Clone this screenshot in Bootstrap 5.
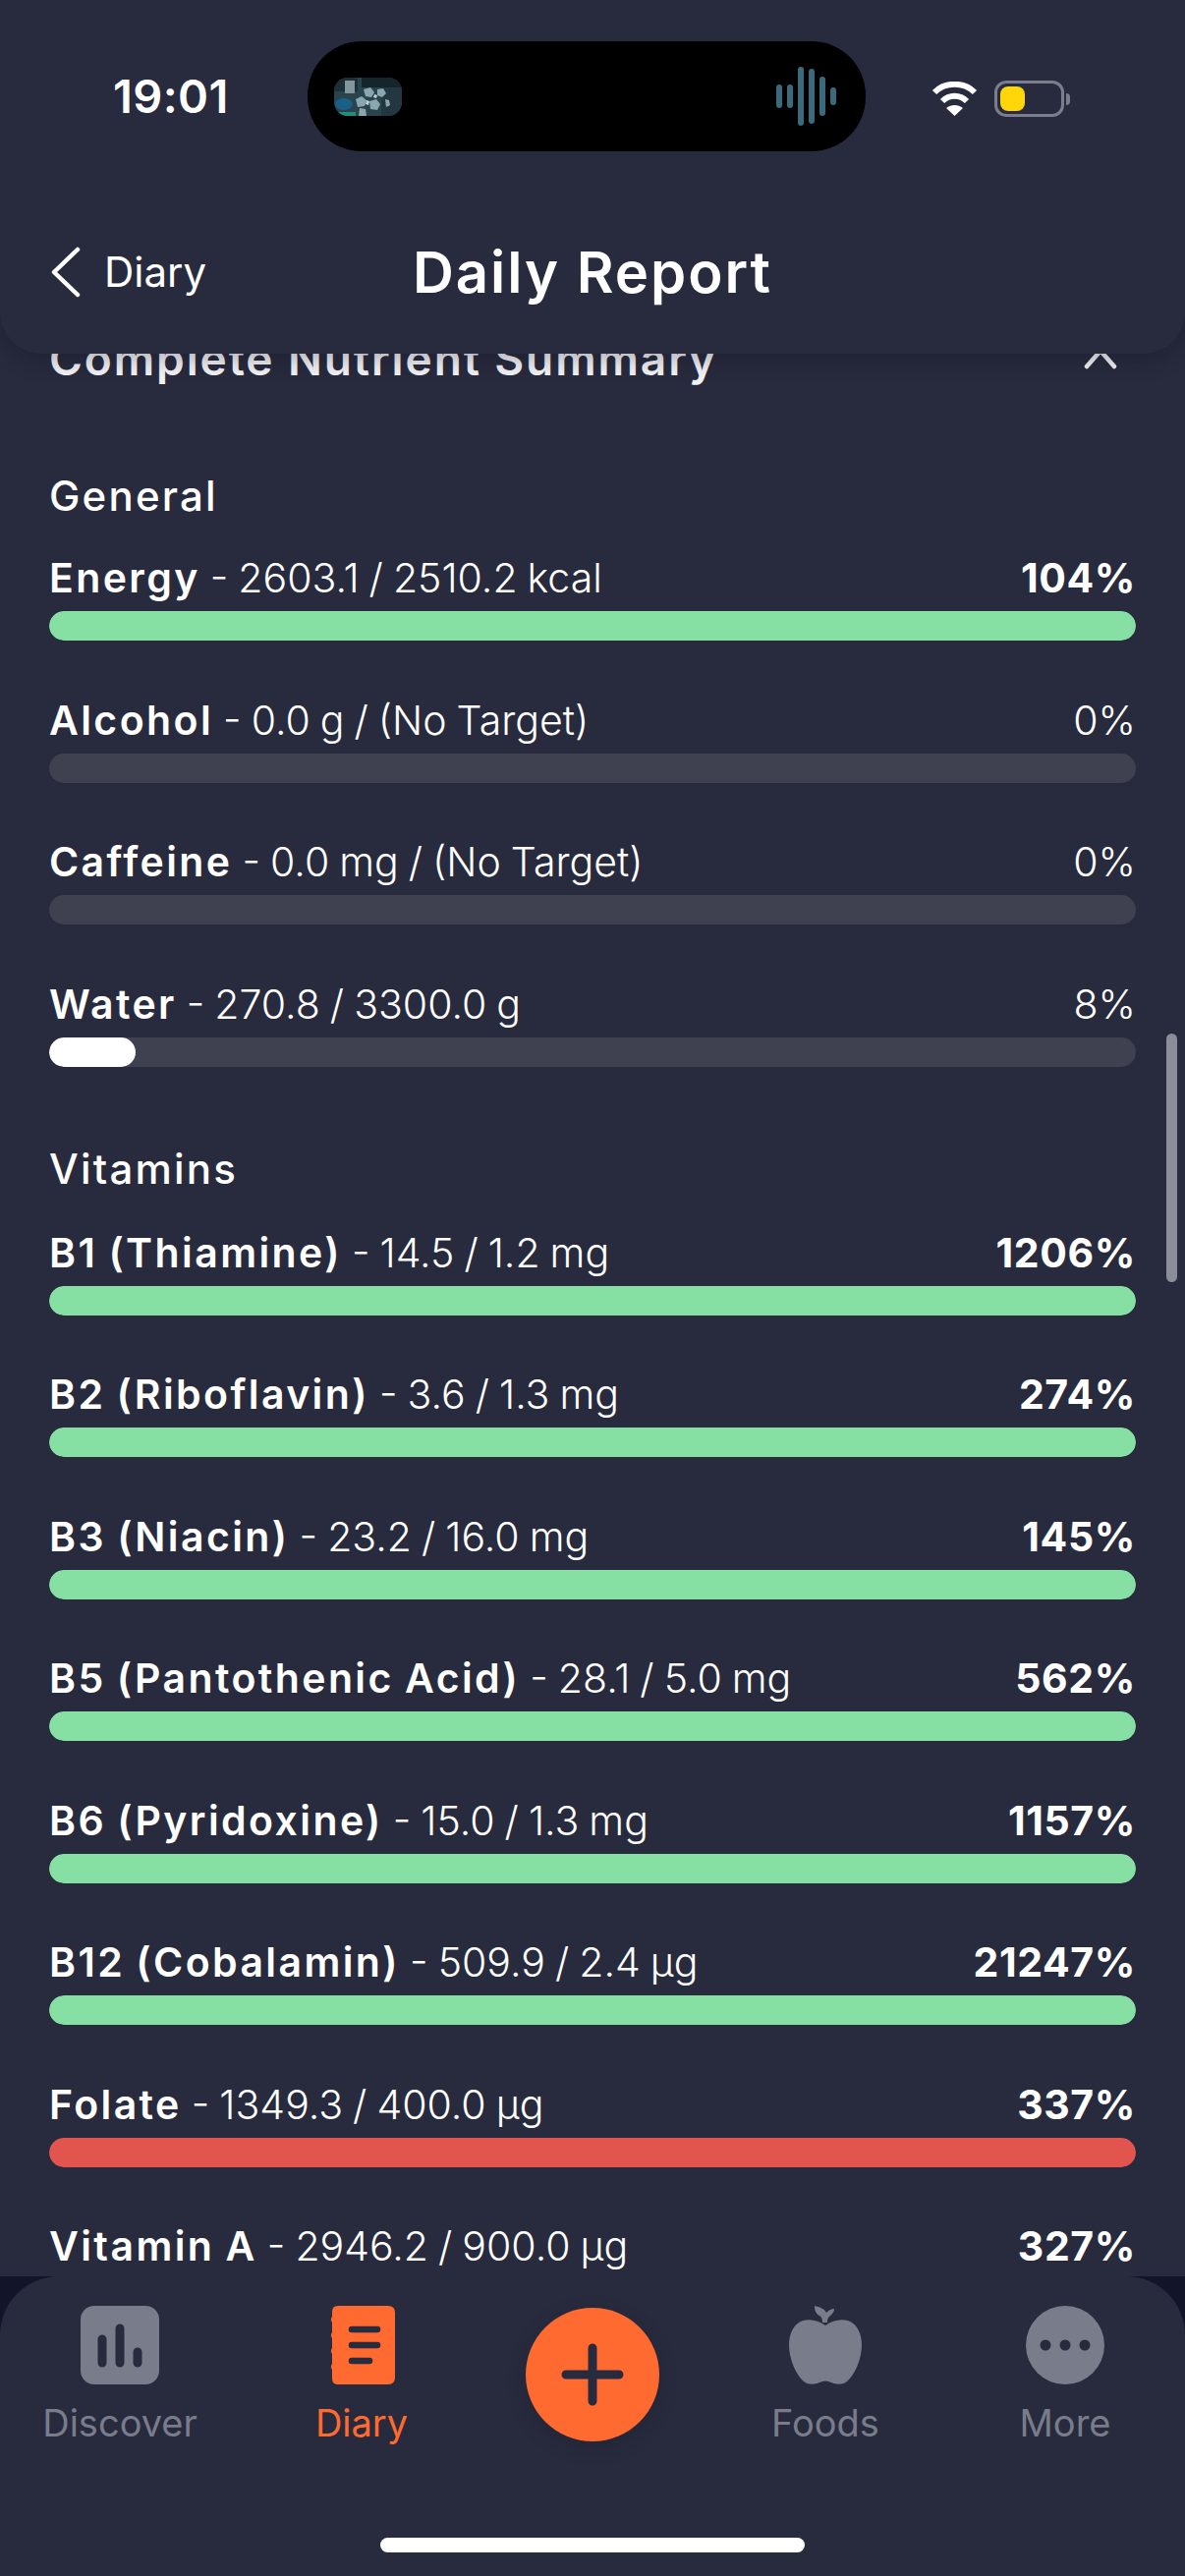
<!doctype html>
<html lang="en">
<head>
<meta charset="utf-8">
<title>Daily Report</title>
<link href="https://cdn.jsdelivr.net/npm/bootstrap@5.3.0/dist/css/bootstrap.min.css" rel="stylesheet">
<style>
html,body{margin:0;background:#12142a;}
body{font-family:Inter,"Liberation Sans",sans-serif;color:#fff;}
.phone{width:1206px;height:2622px;overflow:hidden;display:flex;flex-direction:column;position:relative;background:#12142a;}
.topbar{height:360px;flex:none;background:#282b3d;border-radius:0 0 42px 42px;box-shadow:0 6px 22px rgba(12,14,30,.3);position:relative;z-index:3;padding-top:42px;}
.statusrow{display:grid;grid-template-columns:313px 568px 1fr;height:110px;}
.clock{font-size:47px;font-weight:600;line-height:112px;padding-left:115px;letter-spacing:.4px;}
.island{background:#000;border-radius:55px;display:flex;align-items:center;justify-content:space-between;padding:0 30px 0 27px;}
.sysicons{display:flex;align-items:center;padding-left:67px;padding-top:4px;gap:17px;}
.batt{width:71px;height:37px;border:3px solid #7a7d8c;border-radius:12px;padding:3px;position:relative;}
.batt::after{content:"";position:absolute;right:-9px;top:10px;width:4px;height:12px;background:#7a7d8c;border-radius:0 4px 4px 0;}
.battfill{width:25px;height:25px;background:#ffd60a;border-radius:8px;}
.navrow{display:grid;grid-template-columns:1fr auto 1fr;align-items:center;height:70px;margin-top:90px;padding-left:52px;}
.backlink{display:flex;align-items:center;gap:24px;color:#fff;font-size:42px;line-height:1;text-decoration:none;}
.pagetitle{font-size:58px;font-weight:600;line-height:70px;margin:0 52px 0 0;letter-spacing:2px;}
.pane{flex:1;min-height:0;background:#282b3d;overflow:hidden;padding:42px 50px 0;margin-top:-42px;position:relative;}
.sumhead{display:flex;justify-content:space-between;align-items:center;height:60px;margin-top:-25px;margin-bottom:82px;font-size:46px;font-weight:600;letter-spacing:1.9px;color:#f3f3f6;}
.sumhead svg{margin-right:19px;}
.grouphead{font-size:42px;font-weight:500;line-height:56px;margin-bottom:28px;letter-spacing:2.2px;}
.grouphead.later{margin-top:76px;margin-bottom:30px;}
.nrow{margin-bottom:53.5px;}
.nline{display:flex;justify-content:space-between;line-height:54px;height:56px;margin-bottom:5px;font-size:41px;font-weight:300;white-space:nowrap;word-spacing:-1.5px;}
.nline b{font-weight:600;letter-spacing:2.4px;}
.pct-b{font-weight:700;letter-spacing:.6px;}
.trk.progress{height:30px;background:#3f4150;border-radius:15px;}
.trk .progress-bar{border-radius:15px;}
.fill-g{background:#86e0a3;}
.fill-w{background:#fff;}
.fill-r{background:#e2554e;}
.scrollthumb{position:absolute;left:1187px;top:734px;width:11px;height:253px;border-radius:6px;background:#8b8d98;}
.tabbar{flex:none;height:305px;background:#282b3d;border-radius:60px 60px 0 0;padding-top:30px;position:relative;z-index:3;}
.tabgrid{display:grid;grid-template-columns:244px 248px 222px 252px 236px;height:236px;align-items:start;}
.tabitem{display:flex;flex-direction:column;align-items:center;color:#797c8a;font-size:38px;line-height:47px;text-decoration:none;}
.tabitem svg{margin-bottom:16px;display:block;}
.tabitem.active{color:#ff6a30;}
.addbtn.btn{width:136px;height:136px;border-radius:50%;background:#ff6a30;border:0;padding:0;margin:2px auto 0;display:flex;align-items:center;justify-content:center;box-shadow:0 6px 18px rgba(20,22,40,.25);}
.homebar{width:432px;height:15px;border-radius:8px;background:#fff;margin:0 auto;}
</style>
</head>
<body>
<div class="phone">
  <header class="topbar">
    <div class="statusrow">
      <div class="clock">19:01</div>
      <div class="island">
        <svg width="69" height="39" viewBox="0 0 69 39"><defs><clipPath id="thumb"><rect width="69" height="39" rx="14"/></clipPath></defs><g clip-path="url(#thumb)"><rect width="69" height="39" fill="#2a444e"/><rect x="0" y="0" width="24" height="14" fill="#1d3038"/><rect x="11" y="3" width="10" height="13" fill="#7f979d"/><rect x="28" y="0" width="41" height="10" fill="#14252c"/><rect x="48" y="10" width="21" height="29" fill="#24363f"/><ellipse cx="10" cy="27" rx="9" ry="6" fill="#1a5f86"/><rect x="0" y="35" width="22" height="4" fill="#1f8f78"/><path d="M22 22l6-3 5 4-2 6-7 1zM30 12l7-2 4 5-3 5-6-1zM36 24l7-2 4 5-3 6-7-1zM44 12l6-1 3 5-4 4-5-2zM26 31l6 1 1 7h-8zM52 22l4 1 1 5-4 2z" fill="#8aa6b0"/><path d="M33 23l3 1-1 4-3-1zM41 17l3 1-1 3-3-1z" fill="#c2d3d6"/></g></svg>
        <svg width="61" height="60" viewBox="0 0 61 60" stroke="#3a6a7c" stroke-width="6" stroke-linecap="round"><path d="M3 21V39M14 21V39M25 3V57M36 5V55M47 13V47M58 24V36"/></svg>
      </div>
      <div class="sysicons">
        <svg width="47" height="35" viewBox="0 0 47 35" fill="none" stroke="#fff" stroke-width="6"><path d="M3 11C14 0 33 0 44 11"/><path d="M11 20C18 13 29 13 36 20"/><path d="M23.500 35L15 27C20 23 27 23 32 27Z" fill="#fff" stroke="none"/></svg>
        <div class="batt"><div class="battfill"></div></div>
      </div>
    </div>
    <div class="navrow">
      <a class="backlink" href="#">
        <svg width="30" height="52" viewBox="0 0 30 52" fill="none" stroke="#fff" stroke-width="4.500" stroke-linecap="round" stroke-linejoin="round"><path d="M27 3L3 26L27 49"/></svg>
        <span>Diary</span>
      </a>
      <h1 class="pagetitle">Daily Report</h1>
      <div></div>
    </div>
  </header>

  <main class="pane">
    <div class="sumhead">
      <span>Complete Nutrient Summary</span>
      <svg width="34" height="22" viewBox="0 0 34 22" fill="none" stroke="#f3f3f6" stroke-width="4.500" stroke-linecap="round" stroke-linejoin="round"><path d="M3 19L17 3L31 19"/></svg>
    </div>

    <div class="grouphead">General</div>
    <div class="nrow">
      <div class="nline"><span><b>Energy</b> - 2603.1 / 2510.2 kcal</span><span class="pct-b">104%</span></div>
      <div class="progress trk"><div class="progress-bar fill-g" style="width:100%"></div></div>
    </div>
    <div class="nrow">
      <div class="nline"><span><b>Alcohol</b> - 0.0 g / (No Target)</span><span>0%</span></div>
      <div class="progress trk"><div class="progress-bar fill-g" style="width:0%"></div></div>
    </div>
    <div class="nrow">
      <div class="nline"><span><b>Caffeine</b> - 0.0 mg / (No Target)</span><span>0%</span></div>
      <div class="progress trk"><div class="progress-bar fill-g" style="width:0%"></div></div>
    </div>
    <div class="nrow">
      <div class="nline"><span><b>Water</b> - 270.8 / 3300.0 g</span><span>8%</span></div>
      <div class="progress trk"><div class="progress-bar fill-w" style="width:8%"></div></div>
    </div>

    <div class="grouphead later">Vitamins</div>
    <div class="nrow">
      <div class="nline"><span><b>B1 (Thiamine)</b> - 14.5 / 1.2 mg</span><span class="pct-b">1206%</span></div>
      <div class="progress trk"><div class="progress-bar fill-g" style="width:100%"></div></div>
    </div>
    <div class="nrow">
      <div class="nline"><span><b>B2 (Riboflavin)</b> - 3.6 / 1.3 mg</span><span class="pct-b">274%</span></div>
      <div class="progress trk"><div class="progress-bar fill-g" style="width:100%"></div></div>
    </div>
    <div class="nrow">
      <div class="nline"><span><b>B3 (Niacin)</b> - 23.2 / 16.0 mg</span><span class="pct-b">145%</span></div>
      <div class="progress trk"><div class="progress-bar fill-g" style="width:100%"></div></div>
    </div>
    <div class="nrow">
      <div class="nline"><span><b>B5 (Pantothenic Acid)</b> - 28.1 / 5.0 mg</span><span class="pct-b">562%</span></div>
      <div class="progress trk"><div class="progress-bar fill-g" style="width:100%"></div></div>
    </div>
    <div class="nrow">
      <div class="nline"><span><b>B6 (Pyridoxine)</b> - 15.0 / 1.3 mg</span><span class="pct-b">1157%</span></div>
      <div class="progress trk"><div class="progress-bar fill-g" style="width:100%"></div></div>
    </div>
    <div class="nrow">
      <div class="nline"><span><b>B12 (Cobalamin)</b> - 509.9 / 2.4 µg</span><span class="pct-b">21247%</span></div>
      <div class="progress trk"><div class="progress-bar fill-g" style="width:100%"></div></div>
    </div>
    <div class="nrow">
      <div class="nline"><span><b>Folate</b> - 1349.3 / 400.0 µg</span><span class="pct-b">337%</span></div>
      <div class="progress trk"><div class="progress-bar fill-r" style="width:100%"></div></div>
    </div>
    <div class="nrow">
      <div class="nline"><span><b>Vitamin A</b> - 2946.2 / 900.0 µg</span><span class="pct-b">327%</span></div>
    </div>
    <div class="scrollthumb"></div>
  </main>

  <nav class="tabbar">
    <div class="tabgrid">
      <a class="tabitem" href="#">
        <svg width="80" height="80" viewBox="0 0 80 80"><rect width="80" height="80" rx="14" fill="#797c8a"/><g stroke="#282b3d" stroke-width="9" stroke-linecap="round"><path d="M22 34V58M40 23V58M58 47V58"/></g></svg>
        <span>Discover</span>
      </a>
      <a class="tabitem active" href="#">
        <svg width="68" height="80" viewBox="0 0 68 80"><path d="M10 0H61Q68 0 68 7V73Q68 80 61 80H10Q4 80 4 74V65A5 5 0 0 1 4 59V49A5 5 0 0 1 4 43V33A5 5 0 0 1 4 27V17A5 5 0 0 1 4 11V6Q4 0 10 0Z" fill="#ff6a30"/><g stroke="#282b3d" stroke-width="6.500" stroke-linecap="round"><path d="M24 24H50M24 40H50M24 56H42"/></g></svg>
        <span>Diary</span>
      </a>
      <button class="btn addbtn" type="button" aria-label="Add">
        <svg width="64" height="64" viewBox="0 0 64 64" stroke="#282b3d" stroke-width="9" stroke-linecap="round"><path d="M32 5V59M5 32H59"/></svg>
      </button>
      <a class="tabitem" href="#">
        <svg width="74" height="80" viewBox="0 0 74 80" fill="#797c8a"><path d="M37 20C30 15 22 13 14 15C5 18 0 28 0 40C0 54 7 70 15 77C20 81 27 80 31 78C35 76 39 76 43 78C47 80 54 81 59 77C67 70 74 54 74 40C74 28 69 18 60 15C52 13 44 15 37 20Z"/><path d="M34 17C34 13 33 11 31 10C27 8 26 4 26 0C31 1 36 3 38 7C40 5 43 3 46 3C46 7 43 9 41 11C39 13 39 15 39 17Z"/></svg>
        <span>Foods</span>
      </a>
      <a class="tabitem" href="#">
        <svg width="80" height="80" viewBox="0 0 80 80"><circle cx="40" cy="40" r="40" fill="#797c8a"/><g fill="#282b3d"><circle cx="20" cy="40" r="5.500"/><circle cx="40" cy="40" r="5.500"/><circle cx="60" cy="40" r="5.500"/></g></svg>
        <span>More</span>
      </a>
    </div>
    <div class="homebar"></div>
  </nav>
</div>
<script src="https://cdn.jsdelivr.net/npm/bootstrap@5.3.0/dist/js/bootstrap.bundle.min.js"></script>
</body>
</html>
